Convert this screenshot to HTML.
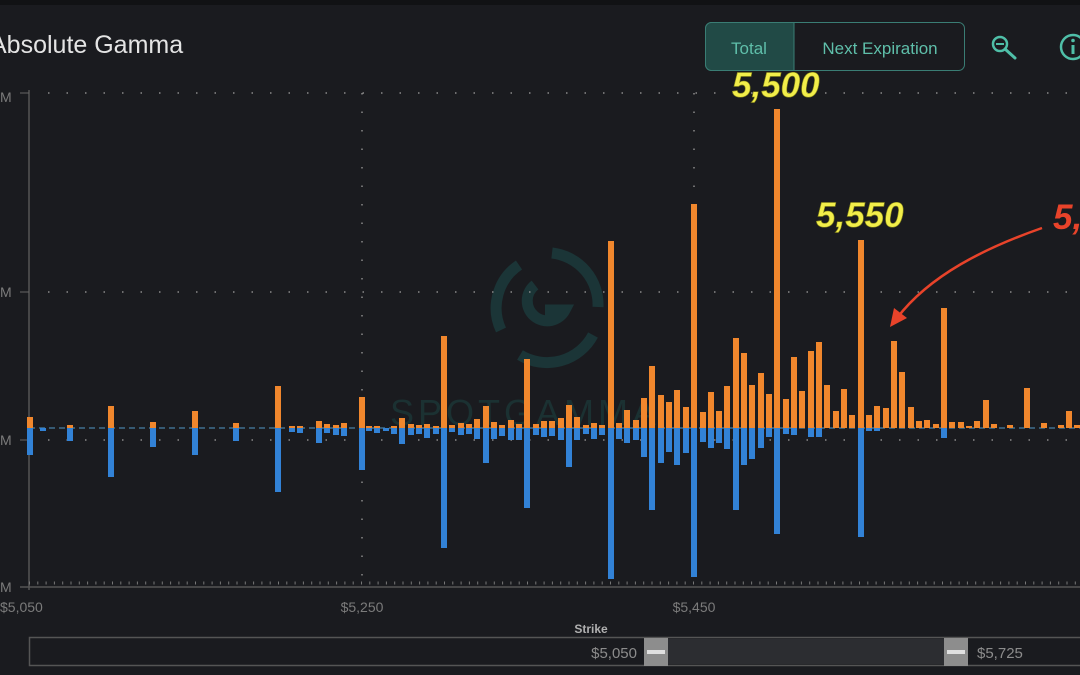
<!DOCTYPE html>
<html><head><meta charset="utf-8"><style>
html,body{margin:0;padding:0;background:#1a1b1f;width:1080px;height:675px;overflow:hidden;font-family:"Liberation Sans",sans-serif}
</style></head><body>
<svg width="1080" height="675" xmlns="http://www.w3.org/2000/svg" style="position:absolute;left:0;top:0">
<rect width="1080" height="675" fill="#1a1b1f"/>
<rect width="1080" height="5" fill="#111214"/>
<text x="-10" y="53" font-size="25" fill="#e4e4e4" font-family="Liberation Sans">Absolute Gamma</text>
<!-- buttons -->
<rect x="705.5" y="22.5" width="259" height="48" rx="6" fill="#1a1b1f" stroke="#3a7d74"/>
<path d="M711.5 22.5 H794 V70.5 H711.5 A6 6 0 0 1 705.5 64.5 V28.5 A6 6 0 0 1 711.5 22.5Z" fill="#214a46" stroke="#3a7d74"/>
<text x="749" y="54" font-size="17" fill="#5fbfaa" text-anchor="middle">Total</text>
<text x="880" y="54" font-size="17" fill="#5fbfaa" text-anchor="middle">Next Expiration</text>
<circle cx="1000" cy="44" r="7" fill="none" stroke="#4fbfa8" stroke-width="2.5"/>
<line x1="996" y1="44" x2="1004" y2="44" stroke="#4fbfa8" stroke-width="2"/>
<line x1="1005" y1="49" x2="1015" y2="58" stroke="#4fbfa8" stroke-width="3" stroke-linecap="round"/>
<circle cx="1073" cy="47" r="12" fill="none" stroke="#4fbfa8" stroke-width="2.5"/>
<rect x="1071.5" y="45" width="3" height="9" fill="#4fbfa8"/><circle cx="1073" cy="40.5" r="1.8" fill="#4fbfa8"/>
<!-- watermark -->
<g fill="none" stroke="#1b3537" stroke-width="11">
<path d="M519 265 A52 52 0 0 0 501 330"/>
<path d="M552 253 A52 52 0 0 1 598 307"/>
<path d="M593 335 A52 52 0 0 1 520 355"/>
<path d="M535 285 A20 20 0 1 0 565 310 H545"/>
</g>
<text x="390" y="425" font-size="36" fill="#1b3132" letter-spacing="4">SPOTGAMMA</text>
<!-- grid -->
<g stroke="#8a8a8a" stroke-width="1.5" stroke-dasharray="1.5 17">
<line x1="48" y1="93" x2="1080" y2="93"/>
<line x1="48" y1="292" x2="1080" y2="292"/>
<line x1="48" y1="440" x2="1080" y2="440"/>
<line x1="362" y1="93" x2="362" y2="587"/>
<line x1="694" y1="93" x2="694" y2="587"/>
</g>
<line x1="29" y1="428" x2="1080" y2="428" stroke="#3f6f8f" stroke-width="1.5" stroke-dasharray="6 4"/>
<line x1="29" y1="90" x2="29" y2="590" stroke="#555" stroke-width="1.5"/>
<line x1="20" y1="93" x2="29" y2="93" stroke="#666"/><line x1="20" y1="292" x2="29" y2="292" stroke="#666"/><line x1="20" y1="440" x2="29" y2="440" stroke="#666"/>
<line x1="20" y1="587" x2="1080" y2="587" stroke="#555" stroke-width="1.5"/>
<line x1="29" y1="583" x2="1080" y2="583" stroke="#777" stroke-width="3" stroke-dasharray="1 7.3"/>
<g font-size="14" fill="#7b7b7b"><text x="0" y="102">M</text><text x="0" y="297">M</text><text x="0" y="445">M</text><text x="0" y="592">M</text>
<text x="0" y="612">$5,050</text><text x="362" y="612" text-anchor="middle">$5,250</text><text x="694" y="612" text-anchor="middle">$5,450</text></g>
<!-- bars -->
<g fill="#f0872d">
<rect x="27" y="417" width="6" height="11"/><rect x="67" y="425" width="6" height="3"/><rect x="108" y="406" width="6" height="22"/><rect x="150" y="422" width="6" height="6"/><rect x="192" y="411" width="6" height="17"/><rect x="233" y="423" width="6" height="5"/><rect x="275" y="386" width="6" height="42"/>
<rect x="289" y="426" width="6" height="2"/><rect x="297" y="426" width="6" height="2"/><rect x="316" y="421" width="6" height="7"/><rect x="324" y="424" width="6" height="4"/><rect x="333" y="425" width="6" height="3"/><rect x="341" y="423" width="6" height="5"/>
<rect x="359" y="397" width="6" height="31"/><rect x="366" y="426" width="6" height="2"/><rect x="374" y="426" width="6" height="2"/><rect x="391" y="426" width="6" height="2"/><rect x="399" y="418" width="6" height="10"/><rect x="408" y="424" width="6" height="4"/><rect x="416" y="425" width="6" height="3"/><rect x="424" y="424" width="6" height="4"/><rect x="433" y="426" width="6" height="2"/><rect x="441" y="336" width="6" height="92"/><rect x="449" y="425" width="6" height="3"/><rect x="458" y="423" width="6" height="5"/><rect x="466" y="424" width="6" height="4"/><rect x="474" y="419" width="6" height="9"/><rect x="483" y="406" width="6" height="22"/><rect x="491" y="422" width="6" height="6"/><rect x="499" y="425" width="6" height="3"/><rect x="508" y="420" width="6" height="8"/><rect x="516" y="424" width="6" height="4"/><rect x="524" y="359" width="6" height="69"/><rect x="533" y="424" width="6" height="4"/><rect x="541" y="421" width="6" height="7"/><rect x="549" y="421" width="6" height="7"/><rect x="558" y="418" width="6" height="10"/><rect x="566" y="405" width="6" height="23"/><rect x="574" y="417" width="6" height="11"/><rect x="583" y="425" width="6" height="3"/><rect x="591" y="423" width="6" height="5"/><rect x="599" y="425" width="6" height="3"/><rect x="608" y="241" width="6" height="187"/><rect x="616" y="423" width="6" height="5"/><rect x="624" y="410" width="6" height="18"/><rect x="633" y="420" width="6" height="8"/><rect x="641" y="398" width="6" height="30"/><rect x="649" y="366" width="6" height="62"/><rect x="658" y="395" width="6" height="33"/><rect x="666" y="402" width="6" height="26"/><rect x="674" y="390" width="6" height="38"/><rect x="683" y="407" width="6" height="21"/><rect x="691" y="204" width="6" height="224"/>
<rect x="700" y="412" width="6" height="16"/><rect x="708" y="392" width="6" height="36"/><rect x="716" y="411" width="6" height="17"/><rect x="724" y="386" width="6" height="42"/><rect x="733" y="338" width="6" height="90"/><rect x="741" y="353" width="6" height="75"/><rect x="749" y="385" width="6" height="43"/><rect x="758" y="373" width="6" height="55"/><rect x="766" y="394" width="6" height="34"/><rect x="774" y="109" width="6" height="319"/><rect x="783" y="399" width="6" height="29"/><rect x="791" y="357" width="6" height="71"/><rect x="799" y="391" width="6" height="37"/><rect x="808" y="351" width="6" height="77"/><rect x="816" y="342" width="6" height="86"/><rect x="824" y="385" width="6" height="43"/><rect x="833" y="411" width="6" height="17"/><rect x="841" y="389" width="6" height="39"/><rect x="849" y="415" width="6" height="13"/><rect x="858" y="240" width="6" height="188"/><rect x="866" y="415" width="6" height="13"/><rect x="874" y="406" width="6" height="22"/><rect x="883" y="408" width="6" height="20"/><rect x="891" y="341" width="6" height="87"/><rect x="899" y="372" width="6" height="56"/><rect x="908" y="407" width="6" height="21"/><rect x="916" y="421" width="6" height="7"/><rect x="924" y="420" width="6" height="8"/><rect x="933" y="424" width="6" height="4"/><rect x="941" y="308" width="6" height="120"/><rect x="949" y="422" width="6" height="6"/><rect x="958" y="422" width="6" height="6"/><rect x="966" y="426" width="6" height="2"/><rect x="974" y="421" width="6" height="7"/><rect x="983" y="400" width="6" height="28"/><rect x="991" y="424" width="6" height="4"/><rect x="1007" y="425" width="6" height="3"/><rect x="1024" y="388" width="6" height="40"/><rect x="1041" y="423" width="6" height="5"/><rect x="1058" y="425" width="6" height="3"/><rect x="1066" y="411" width="6" height="17"/><rect x="1074" y="425" width="6" height="3"/>
</g>
<g fill="#3282d6">
<rect x="27" y="428" width="6" height="27"/><rect x="40" y="428" width="6" height="3"/><rect x="67" y="428" width="6" height="13"/><rect x="108" y="428" width="6" height="49"/><rect x="150" y="428" width="6" height="19"/><rect x="192" y="428" width="6" height="27"/><rect x="233" y="428" width="6" height="13"/><rect x="275" y="428" width="6" height="64"/>
<rect x="289" y="428" width="6" height="4"/><rect x="297" y="428" width="6" height="5"/><rect x="316" y="428" width="6" height="15"/><rect x="324" y="428" width="6" height="5"/><rect x="333" y="428" width="6" height="7"/><rect x="341" y="428" width="6" height="8"/>
<rect x="359" y="428" width="6" height="42"/><rect x="366" y="428" width="6" height="3"/><rect x="374" y="428" width="6" height="5"/><rect x="383" y="428" width="6" height="3"/><rect x="391" y="428" width="6" height="6"/><rect x="399" y="428" width="6" height="16"/><rect x="408" y="428" width="6" height="7"/><rect x="416" y="428" width="6" height="6"/><rect x="424" y="428" width="6" height="10"/><rect x="433" y="428" width="6" height="6"/><rect x="441" y="428" width="6" height="120"/><rect x="449" y="428" width="6" height="4"/><rect x="458" y="428" width="6" height="7"/><rect x="466" y="428" width="6" height="6"/><rect x="474" y="428" width="6" height="11"/><rect x="483" y="428" width="6" height="35"/><rect x="491" y="428" width="6" height="11"/><rect x="499" y="428" width="6" height="8"/><rect x="508" y="428" width="6" height="12"/><rect x="516" y="428" width="6" height="12"/><rect x="524" y="428" width="6" height="80"/><rect x="533" y="428" width="6" height="7"/><rect x="541" y="428" width="6" height="9"/><rect x="549" y="428" width="6" height="8"/><rect x="558" y="428" width="6" height="12"/><rect x="566" y="428" width="6" height="39"/><rect x="574" y="428" width="6" height="12"/><rect x="583" y="428" width="6" height="6"/><rect x="591" y="428" width="6" height="11"/><rect x="599" y="428" width="6" height="7"/><rect x="608" y="428" width="6" height="151"/><rect x="616" y="428" width="6" height="11"/><rect x="624" y="428" width="6" height="15"/><rect x="633" y="428" width="6" height="12"/><rect x="641" y="428" width="6" height="29"/><rect x="649" y="428" width="6" height="82"/><rect x="658" y="428" width="6" height="35"/><rect x="666" y="428" width="6" height="24"/><rect x="674" y="428" width="6" height="37"/><rect x="683" y="428" width="6" height="25"/><rect x="691" y="428" width="6" height="149"/>
<rect x="700" y="428" width="6" height="14"/><rect x="708" y="428" width="6" height="20"/><rect x="716" y="428" width="6" height="15"/><rect x="724" y="428" width="6" height="21"/><rect x="733" y="428" width="6" height="82"/><rect x="741" y="428" width="6" height="37"/><rect x="749" y="428" width="6" height="31"/><rect x="758" y="428" width="6" height="20"/><rect x="766" y="428" width="6" height="9"/><rect x="774" y="428" width="6" height="106"/><rect x="783" y="428" width="6" height="6"/><rect x="791" y="428" width="6" height="7"/><rect x="808" y="428" width="6" height="9"/><rect x="816" y="428" width="6" height="9"/><rect x="858" y="428" width="6" height="109"/><rect x="866" y="428" width="6" height="3"/><rect x="874" y="428" width="6" height="3"/><rect x="941" y="428" width="6" height="10"/>
</g>
<!-- annotations -->
<g font-size="35" font-weight="bold" font-style="italic" fill="#f2ee4a" stroke="#8a8a1a" stroke-width="0.6">
<text x="732" y="97">5,500</text><text x="816" y="227">5,550</text></g>
<text x="1053" y="229" font-size="35" font-weight="bold" font-style="italic" fill="#e8432a">5,</text>
<path d="M1042 228 C985 248 930 275 897 318" fill="none" stroke="#e8432a" stroke-width="2.5"/>
<path d="M890 327 L894 308 L907 318 Z" fill="#e8432a"/>
<!-- slider -->
<text x="591" y="633" font-size="12" font-weight="bold" fill="#b0b0b0" text-anchor="middle">Strike</text>
<rect x="29.5" y="637.5" width="1060" height="28" fill="#1a1b1f" stroke="#555" stroke-width="1.5"/>
<rect x="668" y="639" width="276" height="25" fill="#2c2d31"/>
<rect x="644" y="638" width="24" height="28" fill="#8d8d8d"/><rect x="647" y="650" width="18" height="4" fill="#e0e0e0"/>
<rect x="944" y="638" width="24" height="28" fill="#8d8d8d"/><rect x="947" y="650" width="18" height="4" fill="#e0e0e0"/>
<text x="637" y="658" font-size="15" fill="#8c8c8c" text-anchor="end">$5,050</text>
<text x="977" y="658" font-size="15" fill="#8c8c8c">$5,725</text>
</svg>
</body></html>
